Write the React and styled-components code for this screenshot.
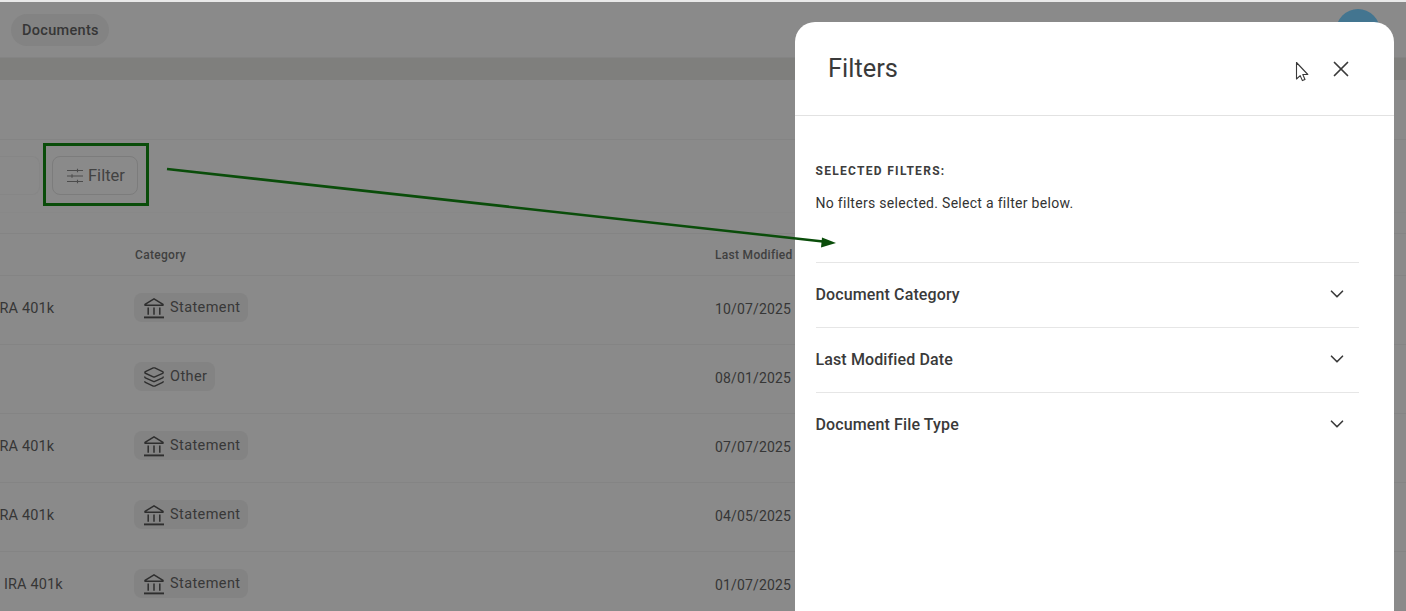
import React from 'react'
import styled, { createGlobalStyle } from 'styled-components'
import { ChevronDown, Layers, X } from 'lucide-react'

const GlobalStyle = createGlobalStyle`
    html, body {
        margin: 0;
        padding: 0;
        height: 100%;
        overflow: hidden;
        font-family: Roboto, "Liberation Sans", sans-serif;
    }
`

const Page = styled.div`
    position: relative;
    width: 1406px;
    height: 611px;
    overflow: hidden;
    background-color: #8a8a8a;
    color: #363636;
`

const TopStrip = styled.div`
    height: 2px;
    background-color: #e9e9e9;
`

const Header = styled.header`
    height: 56px;
    box-sizing: border-box;
    display: flex;
    align-items: flex-start;
    justify-content: space-between;
    padding: 7px 26px 0 11px;
    border-bottom: 1px solid #848484;
`

const NavPill = styled.div`
    margin-top: 5px;
    height: 32px;
    padding: 0 10px 0 11px;
    display: flex;
    align-items: center;
    border-radius: 16px;
    background-color: #838383;
    font-size: 14.5px;
    font-weight: 500;
    letter-spacing: 0.3px;
`

const Avatar = styled.div`
    width: 44px;
    height: 44px;
    border-radius: 50%;
    background-color: #437590;
`

const Band = styled.div`
    height: 22px;
    background-color: #7f7f7d;
`

const TitleArea = styled.div`
    height: 59px;
    border-bottom: 1px solid #848484;
`

const Toolbar = styled.div`
    height: 73px;
    box-sizing: border-box;
    display: flex;
    align-items: flex-start;
    gap: 12px;
    padding-top: 16px;
    border-bottom: 1px solid #888;
`

const SearchField = styled.div`
    width: 40px;
    height: 39px;
    box-sizing: border-box;
    border: 1px solid #868686;
    border-left: none;
    border-radius: 0 8px 8px 0;
`

const FilterButton = styled.div`
    width: 86px;
    height: 39px;
    box-sizing: border-box;
    display: flex;
    align-items: center;
    gap: 4px;
    padding-left: 13px;
    border: 1px solid #7c7c7c;
    border-radius: 8px;
    color: #424242;
    font-size: 16.5px;
`

const Spacer = styled.div`
    height: 20px;
    border-bottom: 1px solid #848484;
`

const TableRow = styled.div`
    display: grid;
    grid-template-columns: 134px 581px 1fr;
    align-items: center;
    height: ${(p) => p.$height}px;
    box-sizing: border-box;
    padding-bottom: ${(p) => p.$lift}px;
    border-bottom: 1px solid #848484;
`

const HeadCell = styled.div`
    font-size: 12px;
    font-weight: 500;
    letter-spacing: 0.3px;
    color: #404040;
    white-space: nowrap;
    padding-left: ${(p) => p.$indent || 0}px;
`

const NameCell = styled.div`
    font-size: 14.5px;
    letter-spacing: 0.12px;
    white-space: nowrap;
    margin-left: ${(p) => p.$shift}px;
`

const Chip = styled.div`
    justify-self: start;
    height: 29px;
    display: flex;
    align-items: center;
    gap: 5px;
    padding: 0 8px 0 9px;
    border-radius: 8px;
    background-color: #838383;
    font-size: 14.5px;
    letter-spacing: 0.4px;
    color: #383838;
    transform: translateY(-1px);
`

const DateCell = styled.div`
    font-size: 14px;
    letter-spacing: 0.15px;
`

const Drawer = styled.aside`
    position: absolute;
    left: 795px;
    top: 22px;
    width: 599px;
    height: 589px;
    background-color: #fff;
    border-radius: 20px 20px 0 0;
    color: #3d3d3d;
`

const DrawerHead = styled.div`
    height: 94px;
    box-sizing: border-box;
    display: flex;
    align-items: flex-start;
    justify-content: space-between;
    padding: 29px 40px 0 33px;
    border-bottom: 1px solid #e2e2e2;
`

const DrawerTitle = styled.h2`
    margin: 0;
    font-size: 25.4px;
    font-weight: 400;
    line-height: 34px;
    color: #3a3a3a;
`

const CloseButton = styled.div`
    display: flex;
    margin-top: 5px;
    color: #3a3a3a;
`

const DrawerBody = styled.div`
    padding: 47px 35px 0 20.5px;
`

const SectionLabel = styled.div`
    font-size: 12px;
    font-weight: 700;
    letter-spacing: 1.3px;
    line-height: 16px;
`

const EmptyNote = styled.p`
    margin: 15px 0 50px;
    font-size: 14px;
    line-height: 18px;
    letter-spacing: 0.29px;
    color: #333;
`

const AccordionRow = styled.div`
    height: 65px;
    box-sizing: border-box;
    display: flex;
    align-items: center;
    justify-content: space-between;
    padding: 0 11px 2px 0;
    border-top: 1px solid #e6e6e6;
    font-size: 16px;
    font-weight: 500;
    letter-spacing: 0.12px;
    color: #3a3a3a;
`

const Annotation = styled.svg`
    position: absolute;
    left: 0;
    top: 0;
    pointer-events: none;
`

const BankIcon = () => (
    <svg width="22" height="22" viewBox="0 0 22 22" fill="none" stroke="#2e2e2e" strokeWidth="1.5">
        <path d="M2 7.4 11 1.8l9 5.6v.8H2z" strokeLinejoin="round" />
        <path d="M5.2 10.5v7.2M11 10.5v7.2M16.8 10.5v7.2" />
        <path d="M1 20.4h20" strokeWidth="1.9" />
    </svg>
)

const TuneIcon = () => (
    <svg width="18" height="18" viewBox="0 0 18 18" fill="none" stroke="#4c4c4c" strokeWidth="1.1">
        <path d="M1 3.5h16M1 9h16M1 14.5h16" />
        <path d="M11.5 1.8v3.4M6 7.3v3.4M11.5 12.8v3.4" />
    </svg>
)

const CursorIcon = () => (
    <svg x="1295" y="61" width="15" height="21" viewBox="0 0 15 21" overflow="visible">
        <path
            d="M1.5 1.5v16.5l3.7-3.4 2.2 5 2.6-1.1-2.2-5h5z"
            fill="#fff"
            stroke="#3a3a3a"
            strokeWidth="1.1"
            strokeLinejoin="round"
        />
    </svg>
)

const rows = [
    { name: 'IRA 401k', shift: -4.5, kind: 'Statement', date: '10/07/2025' },
    { name: '', shift: 0, kind: 'Other', date: '08/01/2025' },
    { name: 'IRA 401k', shift: -4.5, kind: 'Statement', date: '07/07/2025' },
    { name: 'IRA 401k', shift: -4.5, kind: 'Statement', date: '04/05/2025' },
    { name: 'IRA 401k', shift: 4, kind: 'Statement', date: '01/07/2025' },
]

const filterGroups = ['Document Category', 'Last Modified Date', 'Document File Type']

export default function App() {
    return (
        <Page>
            <GlobalStyle />
            <TopStrip />
            <Header>
                <NavPill>Documents</NavPill>
                <Avatar />
            </Header>
            <Band />
            <TitleArea />
            <Toolbar>
                <SearchField />
                <FilterButton>
                    <TuneIcon />
                    Filter
                </FilterButton>
            </Toolbar>
            <Spacer />
            <TableRow $height={42} $lift={0}>
                <div />
                <HeadCell $indent={1}>Category</HeadCell>
                <HeadCell>Last Modified</HeadCell>
            </TableRow>
            {rows.map((row) => (
                <TableRow key={row.date} $height={69} $lift={3}>
                    <NameCell $shift={row.shift}>{row.name}</NameCell>
                    <Chip>
                        {row.kind === 'Statement' ? <BankIcon /> : <Layers size={22} strokeWidth={1.5} color="#2e2e2e" />}
                        {row.kind}
                    </Chip>
                    <DateCell>{row.date}</DateCell>
                </TableRow>
            ))}

            <Drawer>
                <DrawerHead>
                    <DrawerTitle>Filters</DrawerTitle>
                    <CloseButton>
                        <X size={26} strokeWidth={1.6} />
                    </CloseButton>
                </DrawerHead>
                <DrawerBody>
                    <SectionLabel>SELECTED FILTERS:</SectionLabel>
                    <EmptyNote>No filters selected. Select a filter below.</EmptyNote>
                    {filterGroups.map((group) => (
                        <AccordionRow key={group}>
                            {group}
                            <ChevronDown size={22} strokeWidth={1.8} />
                        </AccordionRow>
                    ))}
                </DrawerBody>
            </Drawer>

            <Annotation width="1406" height="611" viewBox="0 0 1406 611">
                <rect x="44.5" y="144.5" width="103" height="60" fill="none" stroke="#0a4d0a" strokeWidth="3" />
                <path d="M167 169 823 241.5" stroke="#0a4d0a" strokeWidth="2.6" fill="none" />
                <path d="M822 237.5 836 243 821 247.5z" fill="#0a4d0a" />
                <CursorIcon />
            </Annotation>
        </Page>
    )
}
